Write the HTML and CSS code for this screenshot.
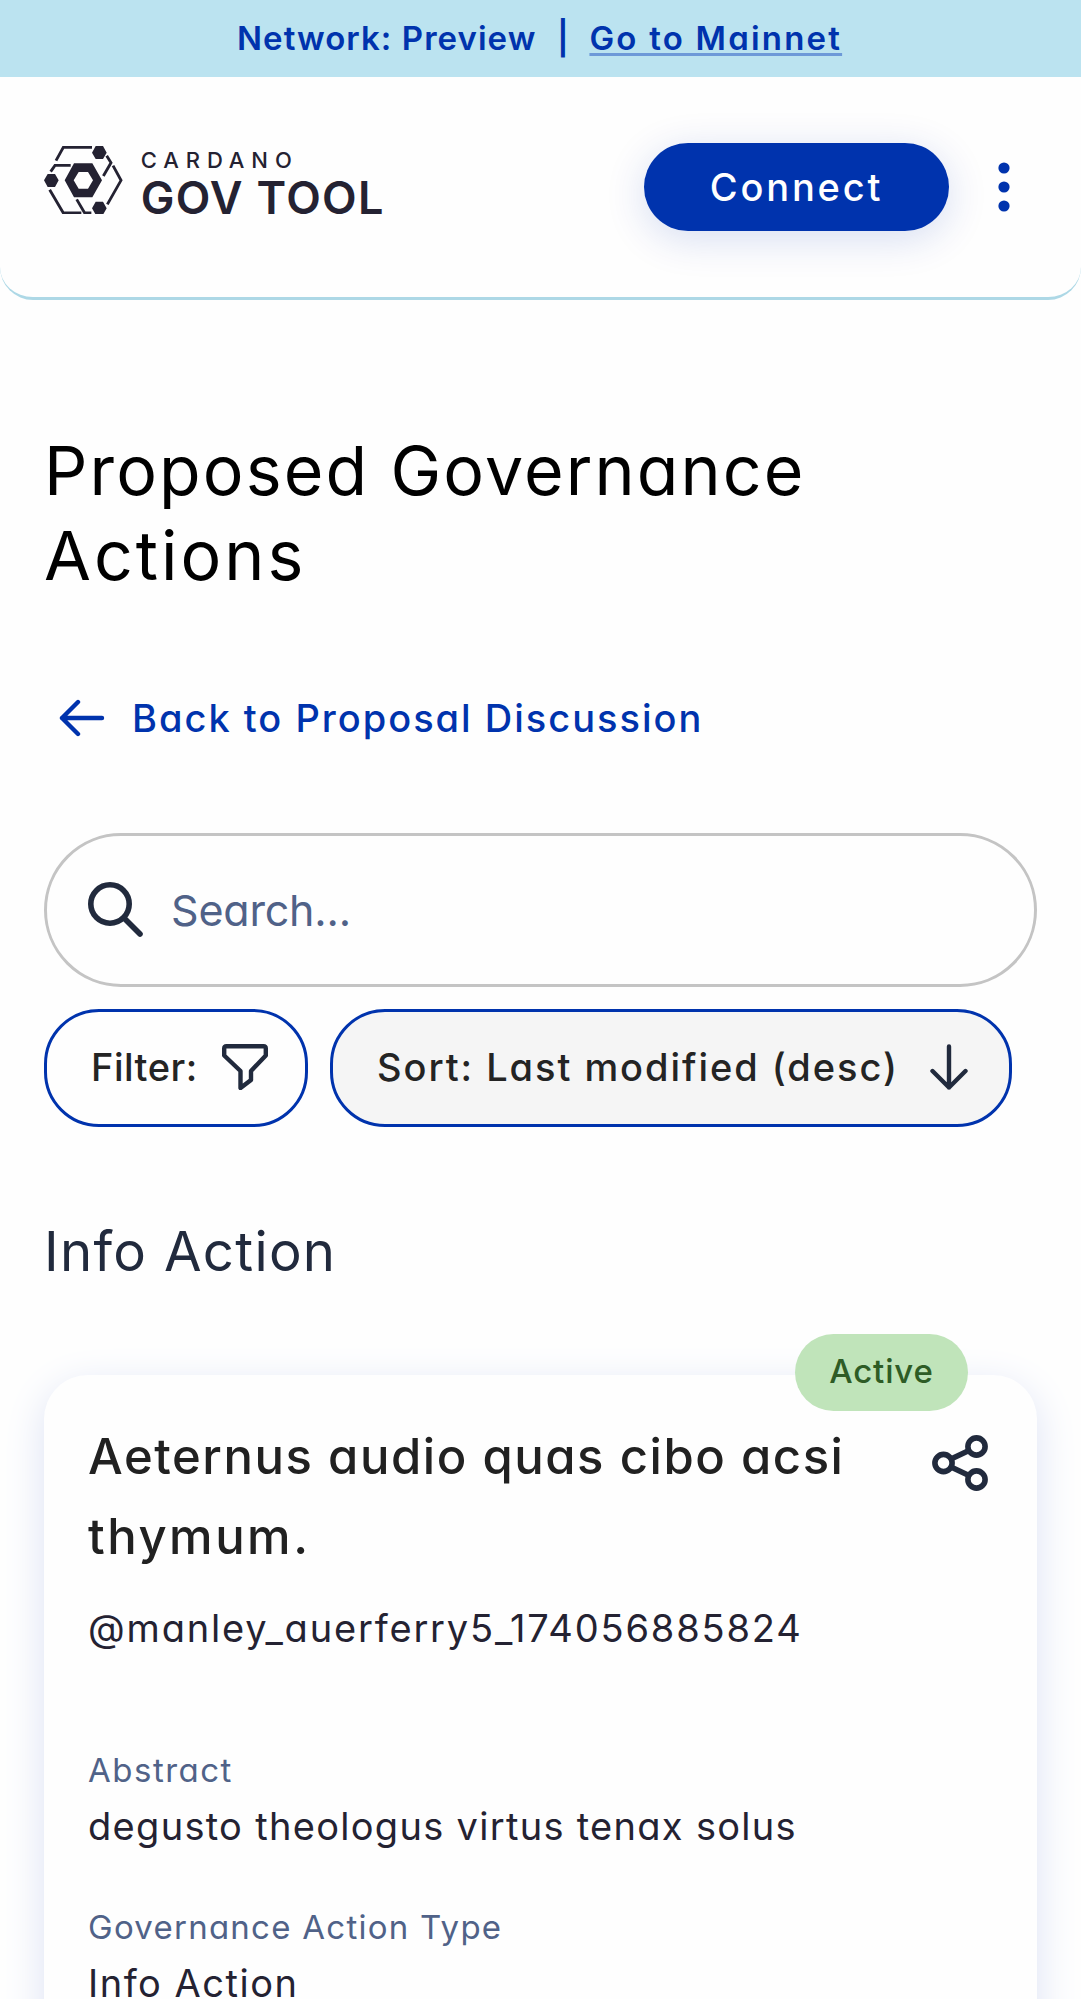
FILE: index.html
```html
<!DOCTYPE html>
<html lang="en">
<head>
<meta charset="utf-8">
<title>Proposed Governance Actions</title>
<link rel="stylesheet" href="styles.css">
</head>
<body>
<div class="banner">
  <span class="network">Network: Preview</span>
  <span class="divider">|</span>
  <a class="mainnet">Go to Mainnet</a>
</div>
<header class="header">
  <div class="logo">
    <svg class="logo-mark" viewBox="0 0 236 206" fill="none" stroke="#242232" stroke-width="8.5">
      <path d="M36 44 58 4H144M20 77 33 58H80M17 131 58 201H112M98 160 122 201H142M178 90 201 50 188 29M190 175 231 103 207 59"/>
      <g fill="#242232" stroke="none">
        <path d="M155 0h22l11 20-11 19h-22l-11-19zM155 167h22l11 20-11 19h-22l-11-19zM11 84h22l11 19-11 20H11L0 103z"/>
        <path fill-rule="evenodd" d="M90 52h55l29 51-29 51H90L62 103zM104 78 89 103l15 25h28l15-25-15-25z"/>
      </g>
    </svg>
    <div class="logo-text">
      <span class="logo-small">CARDANO</span>
      <span class="logo-big">GOV TOOL</span>
    </div>
  </div>
  <div class="header-actions">
    <button class="connect">Connect</button>
    <svg class="menu" viewBox="0 0 12 50" fill="#0033ad"><circle cx="6" cy="6" r="5.6"/><circle cx="6" cy="25" r="5.6"/><circle cx="6" cy="44" r="5.6"/></svg>
  </div>
</header>
<main class="main">
  <h1 class="title">Proposed Governance<br><span class="title-end">Actions</span></h1>
  <a class="back">
    <svg class="back-icon" viewBox="0 0 46 38" fill="none" stroke="#0033ad" stroke-width="4.4" stroke-linecap="round" stroke-linejoin="round"><path d="M43 19H3M19 3 3 19l16 16"/></svg>
    <span>Back to Proposal Discussion</span>
  </a>
  <div class="search">
    <svg class="search-icon" viewBox="0 0 56 56" fill="none" stroke="#212a3d" stroke-width="5.6" stroke-linecap="round"><circle cx="22" cy="22" r="19.2"/><path d="M36 36 52 52"/></svg>
    <span>Search...</span>
  </div>
  <div class="chips">
    <button class="chip"><span class="filter-text">Filter:</span>
      <svg class="filter-icon" viewBox="0 0 46 46" fill="none" stroke="#212a3d" stroke-width="4.4" stroke-linejoin="round"><path d="M4.500 2.200H41.500Q43.800 2.200 43.800 4.500V11.500L29 27V36L18.500 44V27L2.200 11.500V4.500Q2.200 2.200 4.500 2.200Z"/></svg>
    </button>
    <button class="chip chip-active"><span>Sort: Last modified (desc)</span>
      <svg class="sort-icon" viewBox="0 0 38 46" fill="none" stroke="#212a3d" stroke-width="4.400" stroke-linecap="round" stroke-linejoin="round"><path d="M19 2.500V43.500M2.500 27 19 43.500 35.500 27"/></svg>
    </button>
  </div>
  <h2 class="section">Info Action</h2>
  <article class="card">
    <span class="badge">Active</span>
    <div class="card-head">
      <h3 class="card-title">Aeternus audio quas cibo acsi<br><span class="card-title-end">thymum.</span></h3>
      <svg class="share" viewBox="0 0 56 56" fill="none" stroke="#212a3d" stroke-width="5.600"><circle cx="11.500" cy="28" r="8.600"/><circle cx="44.500" cy="11.500" r="8.600"/><circle cx="44.500" cy="44.500" r="8.600"/><path d="M19 24 37 15.500M19 32 37 40.500"/></svg>
    </div>
    <p class="value author">@manley_auerferry5_174056885824</p>
    <p class="label abstract">Abstract</p>
    <p class="value abstract-value">degusto theologus virtus tenax solus</p>
    <p class="label type">Governance Action Type</p>
    <p class="value type-value">Info Action</p>
  </article>
</main>
</body>
</html>
```
FILE: styles.css
```css
* { box-sizing: border-box; }
body {
  margin: 0;
  height: 1999px;
  overflow: hidden;
  background: #fefefe;
  color: #242232;
  font-family: Inter, "Open Sans", sans-serif;
  font-feature-settings: "cv11";
}
h1, h2, h3, p { margin: 0; font-weight: 400; }
button { border: 0; padding: 0; font: inherit; font-feature-settings: inherit; color: inherit; background: none; }
svg { display: block; flex: none; }

.banner {
  height: 77px;
  display: flex;
  align-items: center;
  padding: 0 0 2px 237px;
  background: #bbe3f0;
  color: #0033ad;
  font-size: 33px;
  font-weight: 600;
  white-space: nowrap;
}
.network { letter-spacing: 1.050px; }
.divider { width: 53px; text-align: center; }
.mainnet {
  letter-spacing: 2.200px;
  text-decoration: underline;
  text-decoration-thickness: 3px;
  text-underline-offset: 3px;
  text-decoration-color: #6d99d8;
}

.header {
  height: 223px;
  display: flex;
  justify-content: space-between;
  align-items: center;
  padding: 0 71px 0 44px;
  background: #fefefe;
  border-bottom: 3px solid #add8e6;
  border-radius: 0 0 33px 33px;
}
.logo { display: flex; gap: 18px; margin-bottom: 7px; }
.logo-mark { width: 78.700px; height: 68.700px; }
.logo-text { display: flex; flex-direction: column; align-items: flex-start; }
.logo-small { font-size: 22px; line-height: 28px; font-weight: 500; letter-spacing: 6.900px; }
.logo-big { font-size: 45px; line-height: 48px; font-weight: 600; letter-spacing: 1.300px; }
.header-actions { display: flex; align-items: center; gap: 49px; }
.connect {
  width: 305px;
  height: 88px;
  border-radius: 44px;
  background: #0033ad;
  color: #fff;
  font-size: 38px;
  font-weight: 500;
  letter-spacing: 2.800px;
  box-shadow: 0 8px 40px rgba(0, 51, 173, .16);
}
.menu { width: 12px; height: 50px; }

.main { padding: 127.500px 44px 0; }
.title { font-size: 68px; line-height: 85px; letter-spacing: 2.120px; color: #000; }
.title-end { letter-spacing: 3px; }
.back {
  display: flex;
  align-items: center;
  height: 60px;
  margin: 90px 0 85.500px;
  padding-left: 15px;
  gap: 27px;
  color: #0033ad;
  font-size: 38px;
  font-weight: 500;
  letter-spacing: 2px;
}
.back-icon { width: 46px; height: 38px; }
.search {
  display: flex;
  align-items: center;
  gap: 27px;
  height: 154px;
  padding-left: 41px;
  border: 3px solid #c4c4c4;
  border-radius: 77px;
  background: #fefefe;
  color: #506288;
  font-size: 43px;
  letter-spacing: -.2px;
}
.search-icon { width: 56px; height: 56px; }
.chips { display: flex; gap: 22px; margin-top: 22px; }
.chip {
  display: flex;
  align-items: center;
  height: 118px;
  width: 264px;
  padding: 0 37px 3px 44px;
  justify-content: space-between;
  border: 3px solid #0033ad;
  border-radius: 55px;
  color: #242424;
  font-size: 38px;
  font-weight: 500;
  letter-spacing: 1.950px;
  background: #fefefe;
  white-space: nowrap;
}
.filter-text { letter-spacing: .5px; }
.chip-active { width: 682px; padding-right: 41px; background: #f5f5f5; }
.filter-icon { width: 46px; height: 46px; }
.sort-icon { width: 38px; height: 46px; }
.section { margin: 83.500px 0 84.500px; font-size: 54.500px; line-height: 80px; letter-spacing: 1.300px; color: #212a3d; }

.card {
  position: relative;
  height: 700px;
  padding: 42px 44px 0;
  border-radius: 44px;
  background: #fefefe;
  box-shadow: 0 11px 41px #dde3f5;
}
.badge {
  position: absolute;
  right: 69px;
  top: -41.500px;
  width: 173px;
  height: 77px;
  border-radius: 38.500px;
  background: #c0e4ba;
  color: #2e5c26;
  font-size: 33px;
  font-weight: 500;
  letter-spacing: .870px;
  line-height: 75px;
  text-align: center;
}
.card-head { display: flex; justify-content: space-between; align-items: flex-start; }
.card-title { font-size: 49px; line-height: 80px; letter-spacing: 1.550px; font-weight: 500; color: #212121; white-space: nowrap; }
.card-title-end { letter-spacing: 2.500px; }
.share { width: 56px; height: 56px; margin: 18px 5px 0 0; }
.value { font-size: 38px; line-height: 58px; white-space: nowrap; }
.label { font-size: 33px; line-height: 50px; color: #506288; margin-bottom: 2px; }
.author { margin-top: 22px; letter-spacing: 1.820px; }
.abstract { margin-top: 88px; letter-spacing: 1.500px; }
.abstract-value { letter-spacing: 1.300px; }
.type { margin-top: 47px; letter-spacing: 1.260px; }
.type-value { letter-spacing: 1.500px; }
```
